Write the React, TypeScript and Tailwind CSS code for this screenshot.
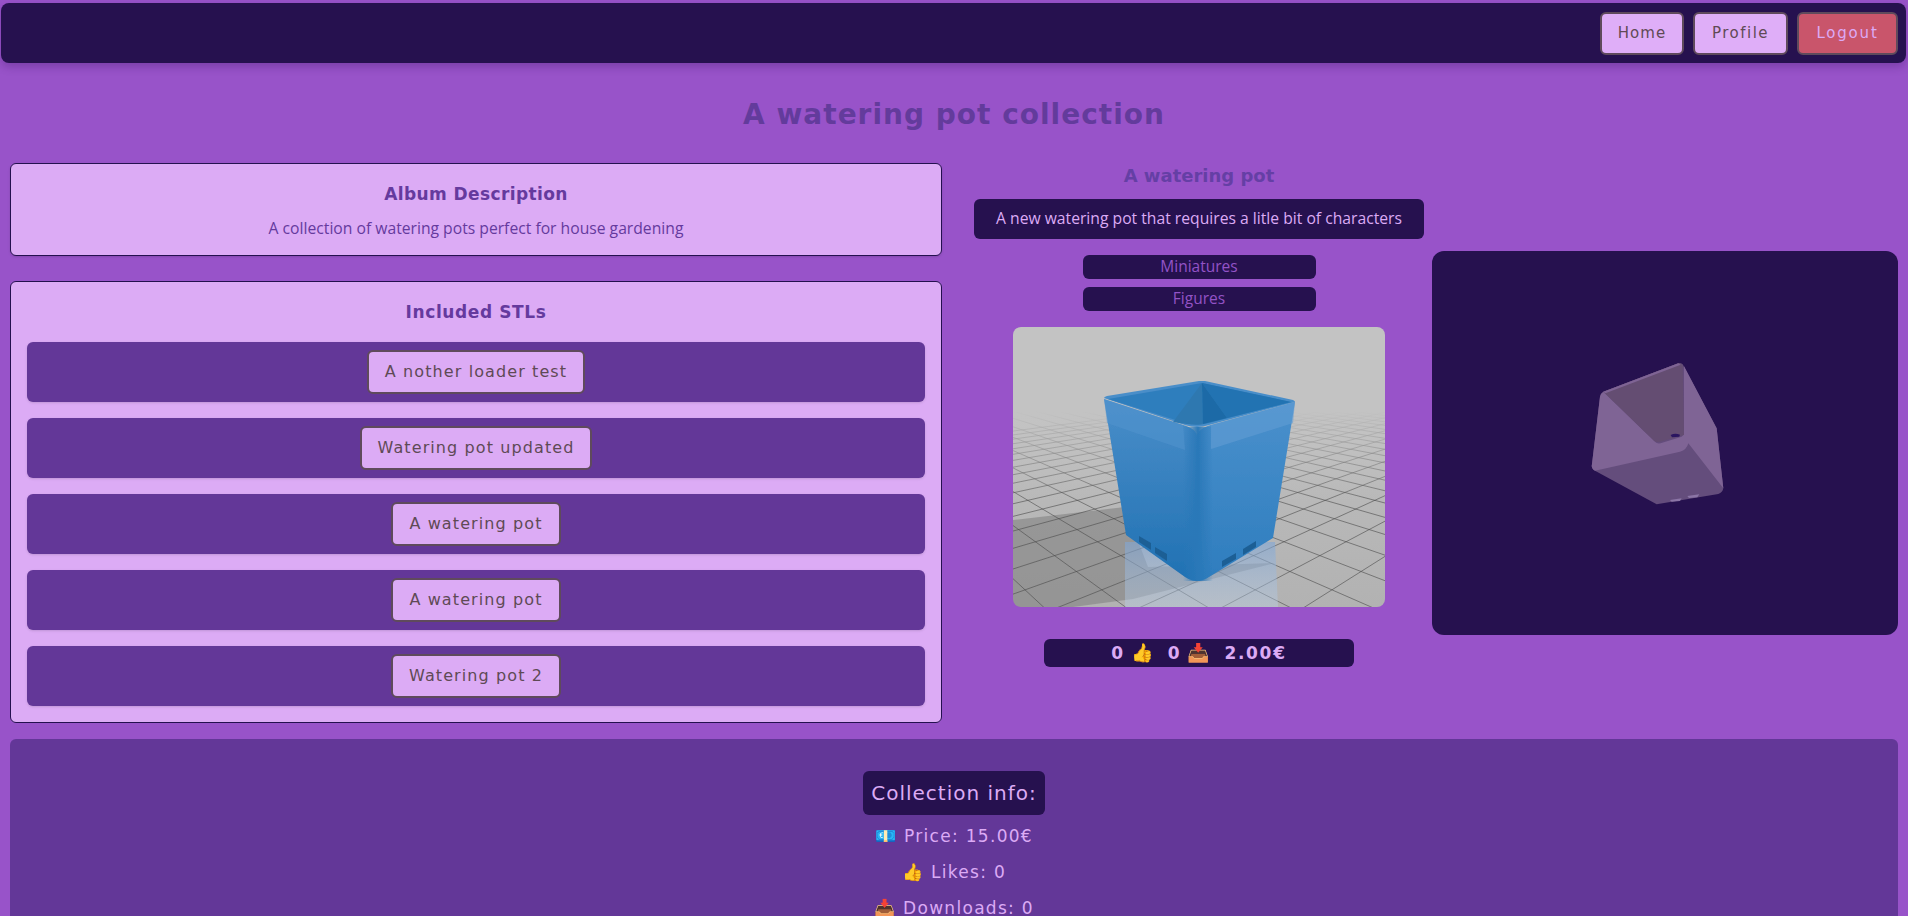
const heading = "font-['DejaVu_Sans',sans-serif]"
const body = "font-['Open_Sans','Noto_Sans',sans-serif]"

const stls = ['A nother loader test', 'Watering pot updated', 'A watering pot', 'A watering pot', 'Watering pot 2']

// floor grid, lines run out to the two vanishing points
const gridLeft = Array.from({ length: 30 }, (_, i) => -300 + i * 88)
const gridRight = Array.from({ length: 30 }, (_, i) => -1500 + i * 88)

function PotRender() {
  return (
    <svg viewBox="0 0 372 280" className="block w-full h-full">
      <defs>
        <linearGradient id="bg" x1="0" y1="0" x2="0" y2="1">
          <stop offset="0" stopColor="#c4c4c4" />
          <stop offset="0.3" stopColor="#c2c2c2" />
          <stop offset="0.45" stopColor="#bbbbbb" />
          <stop offset="1" stopColor="#b2b2b2" />
        </linearGradient>
        <linearGradient id="fade" x1="0" y1="0" x2="0" y2="1">
          <stop offset="0" stopColor="#c3c3c3" stopOpacity="1" />
          <stop offset="0.3" stopColor="#c3c3c3" stopOpacity="1" />
          <stop offset="0.62" stopColor="#c3c3c3" stopOpacity="0" />
        </linearGradient>
        <linearGradient id="potL" x1="0" y1="0" x2="0" y2="1">
          <stop offset="0" stopColor="#4a8ec9" />
          <stop offset="1" stopColor="#2071b3" />
        </linearGradient>
        <linearGradient id="potR" x1="0" y1="0" x2="0" y2="1">
          <stop offset="0" stopColor="#4a90cc" />
          <stop offset="1" stopColor="#2e7dbe" />
        </linearGradient>
        <linearGradient id="corner" x1="0" y1="0" x2="1" y2="0">
          <stop offset="0" stopColor="#2a78b8" stopOpacity="0" />
          <stop offset="0.5" stopColor="#2a78b8" stopOpacity="1" />
          <stop offset="1" stopColor="#2a78b8" stopOpacity="0" />
        </linearGradient>
        <linearGradient id="refl" x1="0" y1="0" x2="0" y2="1">
          <stop offset="0" stopColor="#7fa6d6" stopOpacity="0.6" />
          <stop offset="1" stopColor="#bcd0e8" stopOpacity="0.4" />
        </linearGradient>
        <filter id="soft">
          <feGaussianBlur stdDeviation="0.45" />
        </filter>
      </defs>
      <g filter="url(#soft)">
        <rect width="372" height="280" fill="url(#bg)" />
        {/* floor shadow */}
        <polygon points="0,193 112,180 135,240 262,236 120,272 60,280 0,280" fill="#868686" opacity="0.65" />
        {/* grid */}
        {gridLeft.map(x => (
          <line key={`l${x}`} x1={-260} y1={10} x2={x} y2={300} stroke="#4a4a4a" strokeWidth="0.6" />
        ))}
        {gridRight.map(x => (
          <line key={`r${x}`} x1={720} y1={10} x2={x} y2={300} stroke="#4a4a4a" strokeWidth="0.6" />
        ))}
        <rect width="372" height="280" fill="url(#fade)" />
        {/* reflection */}
        <polygon points="112,215 262,215 265,280 112,280" fill="url(#refl)" />
        {/* pot walls */}
        <path d="M91 72 L170 98 Q184 102 184 110 L184 254 Q178 254 172 250 L113 208 Z" fill="url(#potL)" />
        <path d="M282 75 L198 98 Q184 102 184 110 L184 254 Q190 254 196 250 L260 211 Z" fill="url(#potR)" />
        <rect x="170" y="100" width="30" height="154" fill="url(#corner)" />
        <path d="M91 72 L170 98 L172 123 L94 96 Z" fill="#5293cd" opacity="0.55" />
        <path d="M282 75 L198 98 L198 122 L280 96 Z" fill="#639dd4" opacity="0.6" />
        {/* inside */}
        <path d="M91 71 Q91 70 94 69 L186 54 Q189 54 192 54 L280 73 Q282 74 282 75 L196 98 Q184 102 172 98 Z" fill="#4a8ec9" />
        <path d="M95 72 L189 56 L278 75 L196 96 Q184 99 172 96 Z" fill="#2f7ebd" />
        <path d="M189 56 L278 75 L214 91 Z" fill="#2273b2" />
        <path d="M189 56 L160 95 Q184 99 190 97 Z" fill="#2f78b0" />
        <path d="M189 56 L214 91 L190 97 Z" fill="#1c6ba7" />
        {/* vents */}
        <polygon points="126,209 138,216 138,223 126,215" fill="#1f5f95" />
        <polygon points="142,220 154,227 154,234 142,226" fill="#1f5f95" />
        <polygon points="209,234 223,226 223,232 209,240" fill="#1f5f95" />
        <polygon points="230,222 243,214 243,220 230,228" fill="#1f5f95" />
      </g>
    </svg>
  )
}

function ModelViewer() {
  return (
    <svg viewBox="0 0 466 384" className="block w-full h-full">
      <g transform="translate(108 89) scale(0.3333)">
        <path d="M190 155 L415 70 Q428 68 432 80 L530 265 L550 445 Q548 458 535 462 L350 493 L165 392 Q152 385 156 372 L180 170 Q182 160 190 155 Z" fill="#644d7c" />
        <path d="M180 170 Q182 160 190 155 L345 305 Q350 312 362 310 L425 290 Q432 285 432 270 L432 78 L530 265 L550 445 L445 310 Q440 330 420 335 L165 392 Q152 385 156 372 Z" fill="#7f6495" />
        <path d="M190 155 L415 70 Q425 68 428 75 L432 285 L360 305 Q350 308 342 302 Z" fill="#644d72" />
        <path d="M190 155 L415 70 L422 74 L196 160 Z" fill="#7f6495" />
        <path d="M392 285 Q405 278 420 284 L418 290 L396 292 Z" fill="#2b1560" />
        <path d="M390 480 L425 475 L420 483 L395 485 Z M442 468 L478 463 L472 472 L447 474 Z" fill="#8b75a6" />
      </g>
    </svg>
  )
}

export default function App() {
  return (
    <div className={`h-screen overflow-hidden bg-[#9853c9] ${body}`}>
      <nav className="ml-px mr-[2px] mt-[3px] flex h-[60px] items-center justify-end gap-[9px] rounded-lg bg-[#26114f] pr-[8px] shadow-[0_4px_8px_rgba(60,20,100,0.3)]">
        <button className={`h-[43px] w-[84px] rounded-md border-2 border-[#5f4a5c] bg-[#dfaef8] text-[15px] tracking-[1px] text-[#5f4a55] ${heading}`}>Home</button>
        <button className={`h-[43px] w-[95px] rounded-md border-2 border-[#5f4a5c] bg-[#dfaef8] text-[15px] tracking-[1.5px] text-[#5f4a55] ${heading}`}>Profile</button>
        <button className={`h-[43px] w-[101px] rounded-md border-2 border-[#5f4a5c] bg-[#c9556b] text-[15px] tracking-[1.8px] text-[#dcaaf6] ${heading}`}>Logout</button>
      </nav>

      <div className="px-[10px]">
        <h1 className={`mt-[34px] mb-[30px] h-[36px] text-center text-[28px] leading-[36px] font-bold tracking-[1px] text-[#633b9c] ${heading}`}>
          A watering pot collection
        </h1>

        <div className="flex">
          {/* Album column */}
          <div className="w-[932px] shrink-0">
            <section className="h-[93px] rounded-md border border-[#24104f] bg-[#dcabf5] pt-[17px] text-center shadow-sm">
              <h2 className={`text-[17px] leading-[26px] font-semibold tracking-[0.4px] text-[#653a9e] ${heading}`}>Album Description</h2>
              <p className="mt-[10px] text-[15.7px] leading-[22px] text-[#653a9e]">A collection of watering pots perfect for house gardening</p>
            </section>

            <section className="mt-[25px] h-[442px] rounded-md border border-[#24104f] bg-[#dcabf5] px-4 pt-4 text-center">
              <h2 className={`mb-4 text-[17px] leading-[28px] font-semibold tracking-[0.6px] text-[#653a9e] ${heading}`}>Included STLs</h2>
              <div className="flex flex-col gap-4">
                {stls.map((name, i) => (
                  <div key={i} className="flex h-[60px] items-center justify-center rounded-md bg-[#633798] shadow-sm">
                    <button className={`h-[44px] rounded-md border-2 border-[#5f4a5c] bg-[#dcabf5] px-[16px] text-[16px] tracking-[1.1px] text-[#5f4a55] ${heading}`}>
                      {name}
                    </button>
                  </div>
                ))}
              </div>
            </section>
          </div>

          {/* Stl details */}
          <div className="ml-[32px] flex w-[450px] shrink-0 flex-col items-center">
            <h3 className={`h-[26px] text-[18px] leading-[26px] font-bold text-[#653fa5] ${heading}`}>A watering pot</h3>
            <div className="mt-[10px] flex h-[40px] w-[450px] items-center justify-center rounded-md bg-[#26114f] text-[15.7px] text-[#dcabf5]">
              A new watering pot that requires a litle bit of characters
            </div>
            <div className="mt-4 flex h-[24px] w-[233px] items-center justify-center rounded-md bg-[#26114f] text-[15.5px] text-[#9353c6]">Miniatures</div>
            <div className="mt-2 flex h-[24px] w-[233px] items-center justify-center rounded-md bg-[#26114f] text-[15.5px] text-[#9353c6]">Figures</div>
            <div className="mt-4 h-[280px] w-[372px] overflow-hidden rounded-lg">
              <PotRender />
            </div>
            <div className={`mt-[32px] flex h-[28px] w-[310px] items-center justify-center gap-[15px] rounded-md bg-[#26114f] text-[17px] leading-[28px] font-semibold tracking-[1.7px] text-[#dcabf5] ${heading}`}>
              <span className="flex items-center gap-[6px]">0<span className="text-[18px] leading-[28px] tracking-normal">👍</span></span>
              <span className="flex items-center gap-[6px]">0<span className="text-[18px] leading-[28px] tracking-normal">📥</span></span>
              <span>2.00€</span>
            </div>
          </div>

          {/* Viewer */}
          <div className="flex h-[560px] flex-1 items-center pl-2">
            <div className="h-[384px] w-[466px] overflow-hidden rounded-xl bg-[#26114f]">
              <ModelViewer />
            </div>
          </div>
        </div>

        <section className="mt-4 rounded-md bg-[#633798] pt-[32px] text-center">
          <div className={`mx-auto flex h-[44px] w-[182px] items-center justify-center rounded-md bg-[#26114f] text-[20px] tracking-[1px] text-[#dcabf5] ${heading}`}>
            Collection info:
          </div>
          <p className={`mt-[3px] h-[36px] text-[17px] leading-[36px] tracking-[1.3px] text-[#dcabf5] ${heading}`}>💶 Price: 15.00€</p>
          <p className={`h-[36px] text-[17px] leading-[36px] tracking-[1.3px] text-[#dcabf5] ${heading}`}>👍 Likes: 0</p>
          <p className={`h-[36px] text-[17px] leading-[36px] tracking-[1.3px] text-[#dcabf5] ${heading}`}>📥 Downloads: 0</p>
        </section>
      </div>
    </div>
  )
}
